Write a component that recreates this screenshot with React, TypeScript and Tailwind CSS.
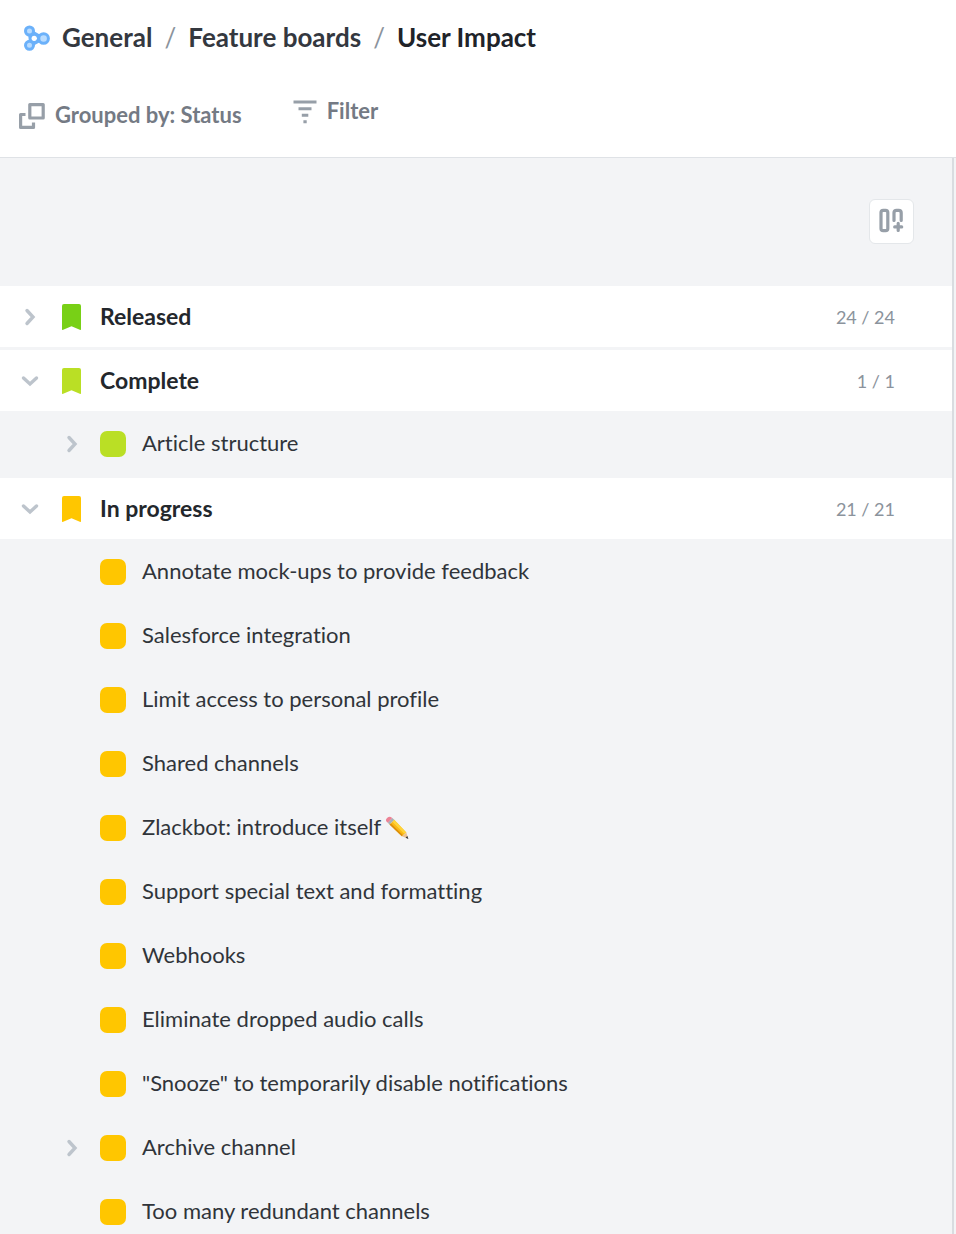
import { useState } from "react";
import clsx from "clsx";

interface Feature {
  name: string;
  expandable?: boolean;
  pencil?: boolean;
}

interface Group {
  name: string;
  count: string;
  flag: string;
  tile: string;
  open: boolean;
  features: Feature[];
}

const GROUPS: Group[] = [
  { name: "Released", count: "24 / 24", flag: "text-[#78d016]", tile: "bg-[#78d016]", open: false, features: [] },
  {
    name: "Complete",
    count: "1 / 1",
    flag: "text-[#badf25]",
    tile: "bg-[#badf25]",
    open: true,
    features: [{ name: "Article structure", expandable: true }],
  },
  {
    name: "In progress",
    count: "21 / 21",
    flag: "text-[#ffc600]",
    tile: "bg-[#ffc600]",
    open: true,
    features: [
      { name: "Annotate mock-ups to provide feedback" },
      { name: "Salesforce integration" },
      { name: "Limit access to personal profile" },
      { name: "Shared channels" },
      { name: "Zlackbot: introduce itself", pencil: true },
      { name: "Support special text and formatting" },
      { name: "Webhooks" },
      { name: "Eliminate dropped audio calls" },
      { name: '"Snooze" to temporarily disable notifications' },
      { name: "Archive channel", expandable: true },
      { name: "Too many redundant channels" },
    ],
  },
];

function BoardIcon() {
  return (
    <svg width="28" height="28" viewBox="0 0 28 28" fill="none" className="shrink-0">
      <path d="M8 7.5L9.5 20M8 7.5L20 14.5L8 21" stroke="#6bb1fa" strokeWidth="4.5" />
      <g fill="#b9dcff" stroke="#6bb1fa" strokeWidth="3">
        <circle cx="7.5" cy="7" r="4" />
        <circle cx="7.5" cy="21.3" r="4" />
        <circle cx="21.6" cy="14.5" r="4.8" />
      </g>
      <circle cx="12.2" cy="14.3" r="2.6" fill="#fff" />
    </svg>
  );
}

function GroupIcon() {
  return (
    <svg width="26" height="26" viewBox="0 0 26 26" fill="none" stroke="#979fa8" strokeWidth="3.2" strokeLinejoin="round" className="shrink-0">
      <rect x="10.8" y="1.6" width="13.4" height="13.4" />
      <path d="M6.5 11.5H1.6V24.4H14.5V19.5" />
    </svg>
  );
}

function FilterIcon() {
  return (
    <svg width="24" height="24" viewBox="0 0 24 24" fill="#979fa8" className="shrink-0">
      <path d="M0.5 0.5h23v3h-23zM5.5 7.2h13v3h-13zM8.8 13.7h6.5v3h-6.5zM10.4 20.2h3.3v3h-3.3z" />
    </svg>
  );
}

function AddColumnIcon() {
  return (
    <svg width="26" height="26" viewBox="0 0 26 26" fill="none" stroke="#979fa8" strokeWidth="3.2" strokeLinecap="round" strokeLinejoin="round">
      <rect x="2" y="2.3" width="6.8" height="20.4" rx="2.2" />
      <path d="M15 12.5V4.8Q15 2.3 17.5 2.3H19.7Q22.2 2.3 22.2 4.8V12.5M19.2 15.4V22.4M15.7 18.9H22.7" />
    </svg>
  );
}

function Chevron({ down }: { down?: boolean }) {
  return (
    <svg width="20" height="20" viewBox="0 0 20 20" fill="none" stroke="#bdc4cc" strokeWidth="3.4" strokeLinecap="round">
      <path d={down ? "M3.5 7L10 13L16.5 7" : "M7 3.5L13 10L7 16.5"} />
    </svg>
  );
}

function Flag({ className }: { className: string }) {
  return (
    <svg width="19" height="26" viewBox="0 0 19 26" fill="currentColor" className={clsx("shrink-0", className)}>
      <path d="M2 0H17Q19 0 19 2V25.2Q19 26.4 17.8 25.8L9.5 22.2L1.2 25.8Q0 26.4 0 25.2V2Q0 0 2 0Z" />
    </svg>
  );
}

function Pencil() {
  return (
    <svg width="24" height="24" viewBox="0 0 24 24" role="img" aria-label="pencil" className="shrink-0">
      <path d="M4.5 8.5L9.2 3.8L21.3 16.6L16.8 20.2Z" fill="#fbb914" />
      <path d="M7.3 5.8L9.2 3.8L21.3 16.6L19.5 18Z" fill="#ffd43a" />
      <path d="M4.5 8.5L5.8 7.2L18 19.3L16.8 20.2Z" fill="#dc8e0b" />
      <path d="M16.8 20.2L21.3 16.6L23.3 22.8Z" fill="#edc391" />
      <path d="M20.6 21.7L22.3 20L23.4 23Z" fill="#30343a" />
      <path d="M2.8 6.8L7.3 1.9L9.2 3.8L4.5 8.5Z" fill="#a7b0b7" />
      <path d="M1.2 5.2Q0.2 3.8 2 2.1Q4.2 0 5.7 0.9L7.3 1.9L2.8 6.8Z" fill="#ec8295" />
    </svg>
  );
}

function FeatureRow({ feature, tile }: { feature: Feature; tile: string }) {
  return (
    <li className="flex h-16 items-center pl-[62px]">
      <div className="flex w-[38px] shrink-0">
        {feature.expandable && (
          <button type="button" aria-label={`Expand ${feature.name}`} className="cursor-pointer">
            <Chevron />
          </button>
        )}
      </div>
      <span className={clsx("mr-4 size-[26px] shrink-0 rounded-[7px]", tile)} />
      <span className="pb-[2px] text-[22px] leading-7 text-[#30343a]">{feature.name}</span>
      {feature.pencil && (
        <span className="ml-1">
          <Pencil />
        </span>
      )}
    </li>
  );
}

function GroupSection({ group }: { group: Group }) {
  const [open, setOpen] = useState(group.open);

  return (
    <section>
      <div className="flex h-16 items-center border-t-2 border-b border-[#f3f4f6] bg-white pr-[57px] pl-5">
        <button
          type="button"
          aria-expanded={open}
          aria-label={`Toggle ${group.name}`}
          onClick={() => setOpen(!open)}
          className="mr-[22px] cursor-pointer"
        >
          <Chevron down={open} />
        </button>
        <Flag className={group.flag} />
        <h2 className="ml-[19px] flex-1 pb-[2px] text-[23px] leading-7 font-bold text-[#23272c]">{group.name}</h2>
        <span className="text-[18px] leading-6 text-[#8b939c]">{group.count}</span>
      </div>
      {open && (
        <ul>
          {group.features.map((feature) => (
            <FeatureRow key={feature.name} feature={feature} tile={group.tile} />
          ))}
        </ul>
      )}
    </section>
  );
}

export default function App() {
  return (
    <div className="flex min-h-screen flex-col bg-white font-['Lato',sans-serif] [font-variant-ligatures:none]">
      <header className="border-b border-[#dfe2e6]">
        <nav aria-label="Breadcrumb" className="flex h-[76px] items-center pl-[22px] text-[26px] leading-8 font-bold text-[#34383f]">
          <BoardIcon />
          <div className="ml-3 flex pb-[2px]">
            <a href="#general">General</a>
            <span className="w-9 text-center font-normal text-[#8b939c]">/</span>
            <a href="#boards">Feature boards</a>
            <span className="w-9 text-center font-normal text-[#8b939c]">/</span>
            <a href="#user-impact" aria-current="page" className="text-[#202329]">User Impact</a>
          </div>
        </nav>
        <div className="flex items-start gap-[51px] px-[19px] pt-[21px] pb-[26px] text-[22px] leading-7 font-bold text-[#747a84]">
          <button type="button" className="flex cursor-pointer items-center gap-[10px] pt-1">
            <GroupIcon />
            <span className="pb-[2px]">Grouped by: Status</span>
          </button>
          <button type="button" className="flex cursor-pointer items-center gap-[10px]">
            <FilterIcon />
            <span className="pb-[2px]">Filter</span>
          </button>
        </div>
      </header>

      <main className="flex flex-1 bg-[#f3f4f6]">
        <div className="min-w-0 flex-1 border-r-2 border-[#d9dce0]">
          <div className="flex h-[126px] items-center justify-end pr-[38px]">
            <button
              type="button"
              aria-label="Add column"
              className="flex size-[45px] cursor-pointer items-center justify-center rounded-md border border-[#e4e7ea] bg-white"
            >
              <AddColumnIcon />
            </button>
          </div>
          {GROUPS.map((group) => (
            <GroupSection key={group.name} group={group} />
          ))}
        </div>
        <div className="w-[2px] bg-[#f3f4f6]" />
      </main>
    </div>
  );
}
